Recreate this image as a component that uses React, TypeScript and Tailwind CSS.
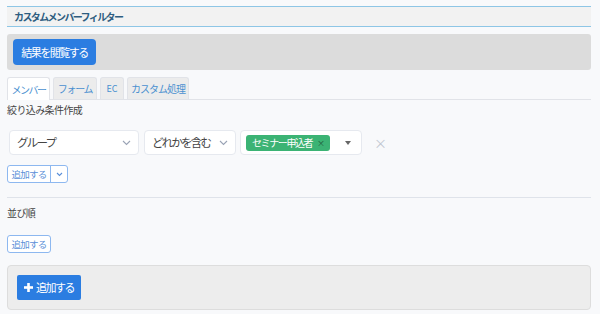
import React from "react";

const Chevron = () => (
  <svg width="9" height="6" viewBox="0 0 9 6" fill="none" stroke="#9aa3b5" strokeWidth="1.1">
    <path d="M1 1l3.5 3.5L8 1" />
  </svg>
);

export default function App() {
  return (
    <div
      className="w-[600px] h-[314px] bg-[#f8f9fb] pl-[7px] pr-[9px] pt-[6px] overflow-hidden text-[#333] font-['Noto_Sans_CJK_JP',sans-serif]"
    >
      {/* header */}
      <div className="h-[21px] border-t border-b border-[#8ec6e6] bg-[#f2f2f2] flex items-center pl-[7px]">
        <span className="text-[10px] font-bold text-[#2e5d80] leading-none tracking-[-1.6px]">カスタムメンバーフィルター</span>
      </div>

      {/* result box */}
      <div className="mt-[7px] h-[36px] bg-[#dcdcdc] rounded-[3px] flex items-center pl-[6px]">
        <button className="h-[26px] w-[83px] flex items-center justify-center bg-[#2b7de1] text-white text-[11px] rounded-[4px] leading-none whitespace-nowrap tracking-[-1.5px]">
          結果を閲覧する
        </button>
      </div>

      {/* tabs */}
      <div className="mt-[7px] flex items-end gap-[3px] border-b border-[#e1e3e8] h-[23px]">
        <div className="h-[23px] w-[43px] justify-center bg-white border border-[#e1e3e8] border-b-0 rounded-t-[3px] flex items-center text-[10px] text-[#4a90d0] -mb-[1px] whitespace-nowrap tracking-[-1.5px]">
          メンバー
        </div>
        <div className="h-[22px] w-[44px] justify-center bg-[#ececec] border border-[#e1e3e8] border-b-0 rounded-t-[3px] flex items-center text-[10px] text-[#4a90d0] whitespace-nowrap tracking-[-1.3px]">
          フォーム
        </div>
        <div className="h-[22px] w-[24px] justify-center bg-[#ececec] border border-[#e1e3e8] border-b-0 rounded-t-[3px] flex items-center text-[9px] text-[#4a90d0] whitespace-nowrap">
          EC
        </div>
        <div className="h-[22px] w-[62px] justify-center bg-[#ececec] border border-[#e1e3e8] border-b-0 rounded-t-[3px] flex items-center text-[10px] text-[#4a90d0] whitespace-nowrap tracking-[-1px]">
          カスタム処理
        </div>
      </div>

      {/* label */}
      <div className="mt-[3px] text-[10px] leading-[14px] text-[#444] tracking-[-0.6px]">絞り込み条件作成</div>

      {/* selects row */}
      <div className="mt-[13px] flex items-center pl-[2px]">
        <div className="w-[130px] h-[25px] bg-white border border-[#e6e9ef] rounded-[4px] flex items-center justify-between pl-[7px] pr-[7px]">
          <span className="text-[11.5px] text-[#444] whitespace-nowrap tracking-[-1.8px]">グループ</span>
          <Chevron />
        </div>
        <div className="ml-[5px] w-[92px] h-[25px] bg-white border border-[#e6e9ef] rounded-[4px] flex items-center justify-between pl-[7px] pr-[7px]">
          <span className="text-[11.5px] text-[#444] whitespace-nowrap tracking-[-1.8px]">どれかを含む</span>
          <Chevron />
        </div>
        <div className="ml-[4px] w-[122px] h-[25px] bg-white border border-[#e6e9ef] rounded-[4px] flex items-center pl-[5px] pr-[10px]">
          <div className="h-[16px] w-[84px] bg-[#3bb374] rounded-[3px] flex items-center pl-[6px] pr-[5px] justify-between">
            <span className="text-[10px] text-white leading-none whitespace-nowrap tracking-[-1.4px]">セミナー申込者</span>
            <span className="text-[8px] text-[#1f5a3a] leading-none">×</span>
          </div>
          <div className="ml-auto w-0 h-0 border-l-[3.5px] border-r-[3.5px] border-t-[4px] border-l-transparent border-r-transparent border-t-[#666]" />
        </div>
        <span className="ml-[12px] text-[13px] text-[#c0c6d0] leading-none">×</span>
      </div>

      {/* add group */}
      <div className="mt-[10px] flex">
        <div className="h-[18px] flex border border-[#8db8f0] rounded-[3px] bg-white">
          <span className="w-[43px] justify-center text-[9.5px] text-[#5a8fd8] flex items-center border-r border-[#8db8f0] whitespace-nowrap tracking-[-0.8px]">追加する</span>
          <span className="w-[16px] flex items-center justify-center">
            <svg width="7" height="5" viewBox="0 0 7 5" fill="none" stroke="#5a8fd8" strokeWidth="1.1">
              <path d="M1 1l2.5 2.5L6 1" />
            </svg>
          </span>
        </div>
      </div>

      {/* divider */}
      <div className="mt-[14px] border-t border-[#dfe3ea]" />

      <div className="mt-[8px] text-[10px] leading-[14px] text-[#444] tracking-[-0.6px]">並び順</div>

      <div className="mt-[15px] flex">
        <div className="h-[18px] w-[44px] justify-center border border-[#8db8f0] rounded-[3px] bg-white flex items-center text-[9.5px] text-[#5a8fd8] whitespace-nowrap tracking-[-0.8px]">
          追加する
        </div>
      </div>

      {/* bottom box */}
      <div className="mt-[12px] h-[45px] bg-[#ededed] border border-[#dddddd] rounded-[4px] flex items-center pl-[9px]">
        <button className="h-[25px] w-[64px] bg-[#2b7de1] text-white text-[11px] rounded-[2px] flex items-center justify-center gap-[3px] leading-none whitespace-nowrap">
          <svg width="9" height="9" viewBox="0 0 9 9" fill="white">
            <rect x="3.2" y="0" width="2.6" height="9" />
            <rect x="0" y="3.2" width="9" height="2.6" />
          </svg>
          <span className="tracking-[-1.5px]">追加する</span>
        </button>
      </div>
    </div>
  );
}
